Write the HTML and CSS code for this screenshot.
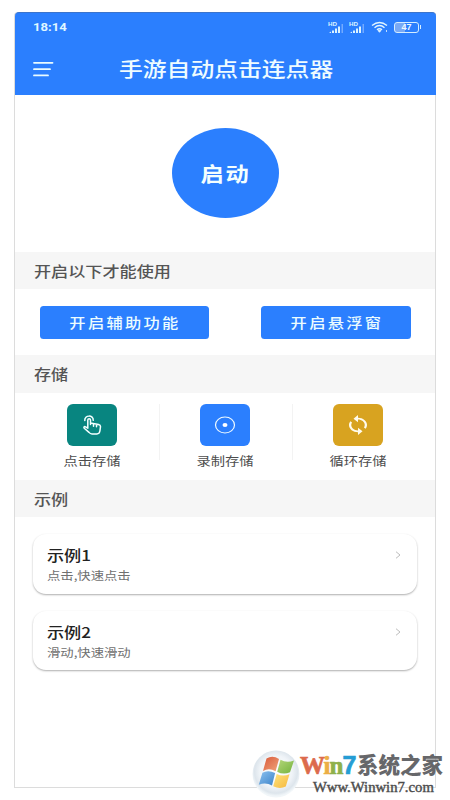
FILE: index.html
```html
<!DOCTYPE html>
<html lang="zh-CN">
<head>
<meta charset="utf-8">
<title>手游自动点击连点器</title>
<link rel="stylesheet" href="styles.css">
</head>
<body>
<div class="phone">
  <header class="header">
    <div class="status">
      <span class="time">18:14</span>
      <div class="status-icons">
        <svg class="signal" width="17" height="13" viewBox="0 0 17 13"><text x="0" y="4.800">HD</text><path d="M1 12l2-1.500V12zM4 9.500h2V12H4zM7 7.500h2V12H7zM10 5.500h2V12h-2z" fill="#dcf3ff"/><path d="M13.500 3h1.500v9h-1.500z" fill="#73aaff"/></svg>
        <svg class="signal" width="17" height="13" viewBox="0 0 17 13"><text x="0" y="4.800">HD</text><path d="M1 12l2-1.500V12zM4 9.500h2V12H4zM7 7.500h2V12H7zM10 5.500h2V12h-2z" fill="#dcf3ff"/><path d="M13.500 3h1.500v9h-1.500z" fill="#73aaff"/></svg>
        <svg class="wifi" width="18" height="12" viewBox="0 0 18 12" fill="none" stroke="#e4f6ff" stroke-width="1.400"><path d="M1 4.500Q8.500-1.500 16 4.500M3.500 6.700Q8.500 2.500 13.500 6.700M6 8.800Q8.500 6.500 11 8.800"/><path d="M7 9.500h3l-1.500 1.800zM15.500 9v2" fill="#e4f6ff" stroke-width=".8"/></svg>
        <span class="battery">47</span>
      </div>
    </div>
    <div class="titlebar">
      <svg class="menu" width="21" height="16" viewBox="0 0 21 16" stroke="#e9fbff" stroke-width="1.800" stroke-linecap="round"><path d="M1 1.800h18.500M1 8.200h16M1 14.400h14"/></svg>
      <h1 class="title">手游自动点击连点器</h1>
    </div>
  </header>
  <div class="hero"><div class="start"><span>启动</span></div></div>
  <h2 class="section"><span>开启以下才能使用</span></h2>
  <div class="actions">
    <div class="button wide"><span>开启辅助功能</span></div>
    <div class="button"><span>开启悬浮窗</span></div>
  </div>
  <h2 class="section storage"><span>存储</span></h2>
  <div class="tools">
    <div class="tool">
      <div class="tile teal"><svg width="19" height="20" viewBox="0 0 19 20" fill="none" stroke="#f4ffff" stroke-width="1.500" stroke-linejoin="round" stroke-linecap="round"><path d="M1.800 5.500C1.200-.3 10.800-.3 10.200 5.300"/><path d="M4.800 13.200V5c0-1.700 2.700-1.700 2.700 0v4.500M7.500 7.900l8 1.500c1.300.3 2 .9 2 2.200l-.6 4.400c-.3 1.900-1.200 2.900-3 2.900H9c-1.300 0-2.200-.5-3-1.500l-4.500-3.900c-1.200-1.200-.2-2.300 1-1.700l2.300 1.400M10.500 9v2.200M13.500 9.500v2.200"/></svg></div>
      <span class="label">点击存储</span>
    </div>
    <div class="tool">
      <div class="tile blue"><svg width="22" height="18" viewBox="0 0 22 18"><ellipse cx="11" cy="9" rx="9.500" ry="8" fill="none" stroke="#f0fbff" stroke-width="1.200"/><ellipse cx="11" cy="9" rx="2.500" ry="2.100" fill="#fff"/></svg></div>
      <span class="label">录制存储</span>
    </div>
    <div class="tool">
      <div class="tile gold"><svg width="18" height="20" viewBox="4 1 16 22" preserveAspectRatio="none"><path fill="#fffbed" d="M12 4V1L8 5l4 4V6c3.310 0 6 2.690 6 6 0 1.010-.25 1.970-.7 2.800l1.460 1.460C19.540 15.030 20 13.570 20 12c0-4.420-3.580-8-8-8zm0 14c-3.310 0-6-2.690-6-6 0-1.010.25-1.970.7-2.800L5.240 7.740C4.460 8.970 4 10.430 4 12c0 4.420 3.580 8 8 8v3l4-4-4-4v3z"/></svg></div>
      <span class="label">循环存储</span>
    </div>
  </div>
  <h2 class="section"><span>示例</span></h2>
  <div class="cards">
    <div class="card">
      <div><h3>示例1</h3><p>点击,快速点击</p></div>
      <svg class="chevron" width="6" height="8" viewBox="0 0 6 8"><path d="M1 .7L5 4 1 7.300" fill="none" stroke="#bdbdbd"/></svg>
    </div>
    <div class="card">
      <div><h3>示例2</h3><p>滑动,快速滑动</p></div>
      <svg class="chevron" width="6" height="8" viewBox="0 0 6 8"><path d="M1 .7L5 4 1 7.300" fill="none" stroke="#bdbdbd"/></svg>
    </div>
  </div>
</div>
<div class="brand">
  <svg class="logo" width="48" height="48" viewBox="0 0 48 48">
    <defs>
      <radialGradient id="orb" cx=".5" cy=".45" r=".52"><stop offset="0" stop-color="#fff"/><stop offset=".65" stop-color="#f0f4f8"/><stop offset=".88" stop-color="#dde5ec"/><stop offset="1" stop-color="#f1f6f9"/></radialGradient>
      <linearGradient id="red" x2="1" y2="1"><stop stop-color="#d9593b"/><stop offset="1" stop-color="#f0a57b"/></linearGradient>
      <linearGradient id="green" x2="1" y2="1"><stop stop-color="#b5d77b"/><stop offset="1" stop-color="#72b23c"/></linearGradient>
      <linearGradient id="azure" x2="1" y2="1"><stop stop-color="#8dc2f0"/><stop offset="1" stop-color="#3c83c9"/></linearGradient>
      <linearGradient id="yellow" x2="1" y2="1"><stop stop-color="#ffe37a"/><stop offset="1" stop-color="#f5b840"/></linearGradient>
    </defs>
    <circle cx="24" cy="24" r="23.500" fill="url(#orb)"/>
    <path d="M14.500 8.500q6-3.500 12.500.4l-3.400 12.300q-6.500-3.500-12.600-.3z" fill="url(#red)"/>
    <path d="M28.500 9.800q6 3.500 13.500.8l-4 11.600q-6.500 3-12.800-.5z" fill="url(#green)"/>
    <path d="M10.400 22.700q6-3.200 12.700.4L20 35.500q-6-3.300-13.200-.8z" fill="url(#azure)"/>
    <path d="M24.700 24q6 3 12.800.3L33.800 36.500q-6 3-12.600-.3z" fill="url(#yellow)"/>
  </svg>
  <div class="brand-text">
    <div class="brand-name"><span class="latin"><b class="w">W</b><b class="i">i</b><b class="n">n</b><b class="seven">7</b></span><span class="han">系统之家</span></div>
    <div class="url">Www.Winwin7.com</div>
  </div>
</div>
</body>
</html>
```

FILE: styles.css
```css
* { box-sizing: border-box; }
html, body { margin: 0; }
body {
  position: relative;
  width: 450px;
  height: 800px;
  overflow: hidden;
  padding: 12px 0 0 14px;
  background: #fff;
  font-family: Roboto, "Noto Sans CJK SC", sans-serif;
}
h1, h2, h3, p { margin: 0; }
.phone {
  width: 422px;
  height: 776px;
  border: solid #dcdcdc;
  border-width: 0 1px 1px 1px;
  border-radius: 4px 4px 0 0;
  background: #fff;
}
.header {
  height: 83px;
  margin-right: -1px;
  border-radius: 4px 4px 0 0;
  background: #2b7ffe;
  border-top: 1px solid #3b74cc;
}
.status {
  height: 30px;
  padding: 0 15px 0 18px;
  display: flex;
  justify-content: space-between;
  align-items: center;
}
.time {
  color: #e0f8ff;
  font: 700 11.500px/16px Roboto, sans-serif;
  transform: translateY(-1px) scaleX(1.14);
  transform-origin: left;
}
.status-icons { display: flex; align-items: center; gap: 4px; transform: translateY(-1px); }
.signal text { font: bold 6.200px "Liberation Sans", sans-serif; fill: #dcf3ff; }
.wifi { margin-left: 1px; }
.battery {
  position: relative;
  width: 25px;
  height: 11px;
  margin: 0 2px 0 1px;
  border: 1px solid #d5edff;
  border-radius: 3px;
  background: linear-gradient(90deg, #79a9f5 45%, #2b7ffe 45%);
  color: #effaff;
  font: bold 9px/9px "Liberation Sans", sans-serif;
  text-align: center;
}
.battery::after {
  content: "";
  position: absolute;
  right: -3px;
  top: 2.500px;
  width: 1.500px;
  height: 4px;
  background: #d5edff;
}
.titlebar { display: flex; align-items: center; height: 52px; padding-left: 18px; }
.title {
  width: 200px;
  margin-left: 64.500px;
  color: #effcff;
  font: 500 20px/28px "Noto Sans CJK SC", sans-serif;
  transform: scaleX(1.19);
  transform-origin: left;
}
.hero { height: 157px; padding-top: 33px; }
.start {
  display: flex;
  align-items: center;
  justify-content: center;
  width: 107px;
  height: 90px;
  margin-left: 157px;
  border-radius: 50%;
  background: #2b7ffe;
  color: #f4ffff;
}
.start span {
  font: 700 20px/28px "Noto Sans CJK SC", sans-serif;
  letter-spacing: 1.500px;
  transform: translateY(1px) scaleX(1.16);
}
.section {
  display: flex;
  align-items: center;
  height: 37px;
  padding-left: 19px;
  background: #f6f6f6;
  color: #555;
}
.section span {
  font: 500 14.400px/20px "Noto Sans CJK SC", sans-serif;
  transform: scaleX(1.19);
  transform-origin: left;
}
.storage { height: 38px; }
.actions {
  display: flex;
  justify-content: space-between;
  height: 66px;
  padding: 17px 24px 0 25px;
}
.button {
  display: flex;
  align-items: center;
  justify-content: center;
  width: 150px;
  height: 33px;
  border-radius: 3.500px;
  background: #2b7ffe;
  color: #ecfcff;
}
.wide { width: 169px; }
.button span {
  font: 500 14px/20px "Noto Sans CJK SC", sans-serif;
  letter-spacing: 2px;
  margin-right: -1px;
  transform: translateY(-1px) scaleX(1.16);
}
.tools { display: flex; height: 87px; padding: 11px 0 0 11px; }
.tool {
  position: relative;
  display: flex;
  flex-direction: column;
  align-items: center;
  width: 133px;
  height: 56px;
}
.tool + .tool::before {
  content: "";
  position: absolute;
  left: 0;
  top: 0;
  height: 56px;
  border-left: 1px solid #f3f3f3;
}
.tile {
  display: flex;
  flex: none;
  align-items: center;
  justify-content: center;
  width: 50px;
  height: 42px;
  margin-right: 1px;
  border-radius: 6px;
}
.teal { background: #088580; }
.blue { background: #2b7ffe; }
.gold { background: #d8a320; }
.label {
  flex: none;
  margin-top: 6px;
  color: #4d4d4d;
  font: 400 12px/18px "Noto Sans CJK SC", sans-serif;
  transform: scaleX(1.19);
}
.cards { display: flex; flex-direction: column; gap: 17px; padding: 17px 18px 0; }
.card {
  display: flex;
  justify-content: space-between;
  height: 60px;
  padding: 10px 16px 0 14px;
  border-radius: 13px;
  background: #fff;
  box-shadow: 0 1px 2px rgba(0, 0, 0, .32);
}
.card + .card { height: 59px; }
.card h3 {
  color: #222;
  font: 500 14.400px/22px "Noto Sans CJK SC", sans-serif;
  transform: scaleX(1.19);
  transform-origin: left;
}
.card p {
  color: #707070;
  font: 400 11.600px/18px "Noto Sans CJK SC", sans-serif;
  transform: scaleX(1.15);
  transform-origin: left;
}
.chevron { margin-top: 7px; }
.brand {
  position: absolute;
  left: 252px;
  top: 750px;
  display: flex;
}
.brand-text { padding-top: 1px; }
.brand-name { display: flex; height: 28px; }
.latin {
  width: 57px;
  white-space: nowrap;
  font: bold 25px/28px "Liberation Serif", serif;
  letter-spacing: -1px;
}
.latin b { -webkit-text-stroke: .7px currentColor; }
.w { color: #dc6b4c; }
.i { color: #ecae46; }
.n { color: #8fb04b; }
.latin .seven {
  color: #259dd4;
  font-family: "Liberation Sans", sans-serif;
  letter-spacing: 0;
}
.han {
  color: #66676a;
  font: 900 21.500px/28px "Noto Sans CJK SC", sans-serif;
  transform: translateY(-1px);
}
.url {
  margin-left: 13px;
  color: #4b4b4b;
  font: 400 14.700px/16px "Liberation Serif", serif;
  -webkit-text-stroke: .4px currentColor;
}
```
